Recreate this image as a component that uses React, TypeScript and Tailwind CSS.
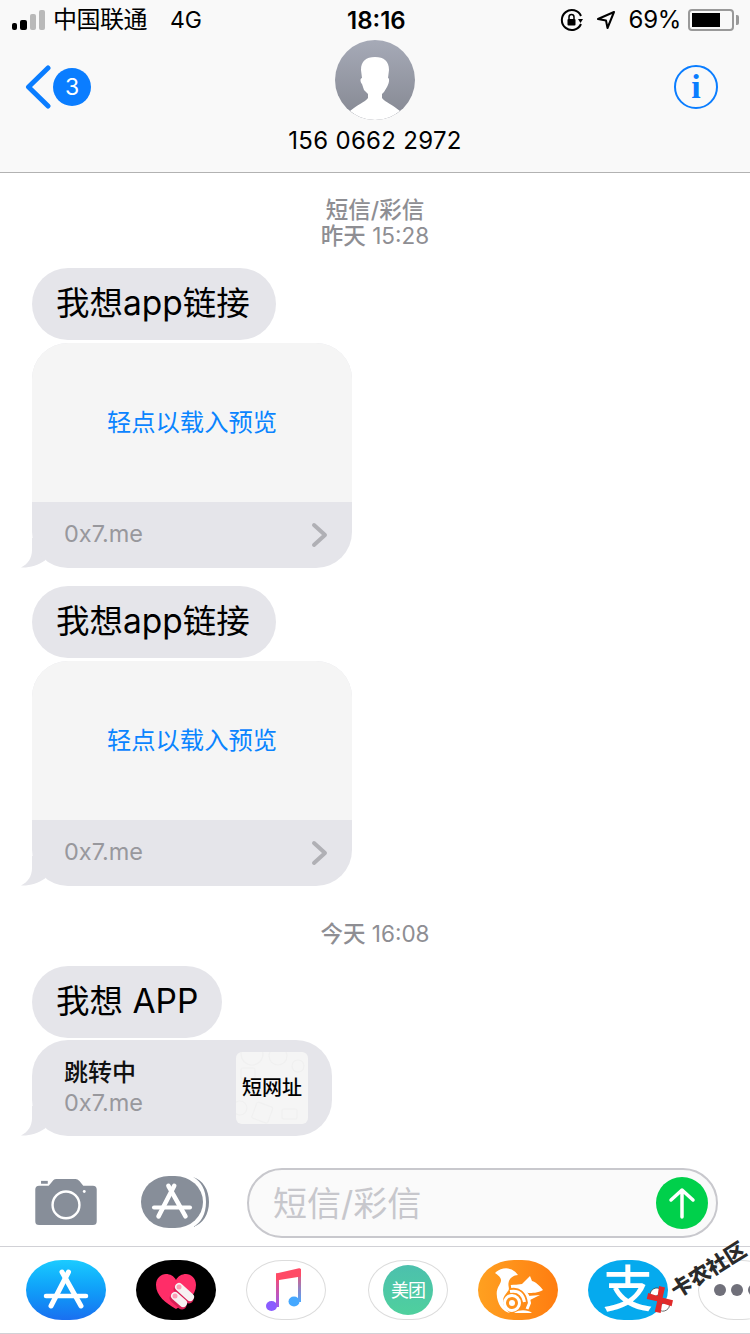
const font = { fontFamily: '"Inter", "Noto Sans CJK SC", sans-serif' };

// the little curl under the last bubble of a group
function Tail() {
  return (
    <svg className="absolute left-[-12px] bottom-0" width="32" height="30" viewBox="0 0 32 30">
      <path d="M12 0 V12 C12 20 8 26 1 29.500 C9 30 18 27.500 25 22.500 L32 0 Z" fill="#e5e5ea" />
    </svg>
  );
}

function TextBubble({ text, width }: { text: string; width: string }) {
  return (
    <div className={`${width} h-[72px] rounded-[36px] bg-[#e5e5ea] flex items-center pl-[24px] text-[33.500px] text-black whitespace-nowrap`}>
      <span className="mt-[-2px]">{text}</span>
    </div>
  );
}

function LinkCard() {
  return (
    <div className="relative w-[320px] h-[225px] mt-[3px]">
      <Tail />
      <div className="relative h-full rounded-[36px] overflow-hidden bg-[#e5e5ea]">
        <div className="h-[159px] bg-[#f5f5f5] flex items-center justify-center text-[24.300px] text-[#0a84ff]">
          轻点以载入预览
        </div>
        <div className="h-[66px] flex items-center justify-between pl-[32px] pr-[23px] text-[23.500px] text-[#98989d]">
          <span className="mt-[-2px]">0x7.me</span>
          <svg width="18" height="26" viewBox="0 0 18 26" fill="none" stroke="#b0b0b5" strokeWidth="4" strokeLinecap="round" strokeLinejoin="round">
            <path d="M3 3 L14 13 L3 23" />
          </svg>
        </div>
      </div>
    </div>
  );
}

function AppStoreGlyph({ size = 80 }: { size?: number }) {
  return (
    <svg className="shrink-0" width={size} height={(size * 60) / 80} viewBox="0 0 80 60" fill="none" stroke="white" strokeWidth="5" strokeLinecap="round">
      <path d="M42.500 12 L25 46" />
      <path d="M36 12 L55 46" />
      <path d="M20 36 H60" strokeWidth="4.500" />
    </svg>
  );
}

function Oval({ className, children }: { className: string; children?: React.ReactNode }) {
  return <div className={`w-[80px] h-[60px] shrink-0 rounded-[36px/30px] flex items-center justify-center overflow-hidden ${className}`}>{children}</div>;
}

function StatusBar() {
  return (
    <div className="relative h-[40px] flex items-center justify-between text-[24px] text-black pl-[12px] pr-[11px]">
      <div className="flex items-center">
        <div className="flex items-end gap-[3px] w-[34px]">
          <span className="w-[5px] h-[7px] rounded-[2px] bg-black" />
          <span className="w-[7px] h-[10px] rounded-[2px] bg-black" />
          <span className="w-[6px] h-[16px] rounded-[2px] bg-[#b9b9b9]" />
          <span className="w-[6px] h-[20px] rounded-[2px] bg-[#b9b9b9]" />
        </div>
        <span className="ml-[7px] tracking-[-0.5px]">中国联通</span>
        <span className="ml-[23px] text-[23px]">4G</span>
      </div>
      <span className="absolute left-[347px] top-[3px] font-semibold">18:16</span>
      <div className="flex items-center">
        <svg width="24" height="24" viewBox="0 0 24 24" fill="none">
          <path d="M21 8 A10 10 0 1 0 21 16" stroke="black" strokeWidth="2" />
          <path d="M18 11 L23 11 L20.500 15 Z" fill="black" />
          <rect x="7.500" y="11" width="8" height="6.500" rx="1" fill="black" />
          <path d="M9 11 V9 A2.500 2.500 0 0 1 14 9 V11" stroke="black" strokeWidth="1.500" />
        </svg>
        <svg className="ml-[12px]" width="20" height="20" viewBox="0 0 20 20" fill="none" stroke="black" strokeWidth="2" strokeLinejoin="round">
          <path d="M18 2 L2 9 L10 10.500 L11.500 18 Z" />
        </svg>
        <span className="ml-[13px] tracking-[-0.3px]">69%</span>
        <div className="ml-[7px] w-[46px] h-[22px] rounded-[4px] border-2 border-[#999999] p-[2px]">
          <div className="h-full w-[28px] bg-black" />
        </div>
        <span className="ml-[2px] w-[3px] h-[10px] rounded-r-[2px] bg-[#999999]" />
      </div>
    </div>
  );
}

function NavBar() {
  return (
    <div className="h-[133px] border-b border-[#b2b2b2] relative flex flex-col items-center">
      <div className="absolute left-[25px] top-[25px] flex items-center">
        <svg width="26" height="44" viewBox="0 0 26 44" fill="none" stroke="#0a7dff" strokeWidth="5" strokeLinecap="round" strokeLinejoin="round">
          <path d="M23 3 L3.500 22 L23 41" />
        </svg>
        <div className="ml-[2px] w-[38px] h-[38px] rounded-full bg-[#0a7dff] flex items-center justify-center text-white text-[23px]">3</div>
      </div>
      <div className="w-[80px] h-[80px] rounded-full overflow-hidden bg-gradient-to-b from-[#a6aab7] to-[#858892]">
        <svg width="80" height="80" viewBox="0 0 80 80">
          <path d="M40 17 C49 17 54 21 54 30 L53 38 C55 38 54 44 52 47 L49 52 L47 54 V58 C50 62 58 65 65 71 A38 38 0 0 1 15 71 C22 65 30 62 33 58 V54 L29 50 L27 44 C25 42 25 38 27 38 L26 30 C26 21 31 17 40 17 Z" fill="white" />
        </svg>
      </div>
      <div className="mt-[6px] text-[24px] leading-[30px] tracking-[0.3px] text-black">156 0662 2972</div>
      <div className="absolute left-[674px] top-[25px] w-[44px] h-[44px] rounded-full border-2 border-[#0a7dff] flex items-center justify-center text-[#0a7dff] text-[34px] font-bold leading-none" style={{ fontFamily: '"Liberation Serif", serif' }}>
        i
      </div>
    </div>
  );
}

function InputBar() {
  return (
    <div className="absolute left-0 right-0 top-[1168px] h-[79px] flex items-start pl-[34px] bg-white border-b border-[#d1d1d6]">
      <svg className="mt-[10px]" width="64" height="48" viewBox="0 0 64 50">
        <path d="M6 8 H14 L19 2 Q20 1 22 1 H42 Q44 1 46 3 L50 8 H60 Q64 8 64 12 V45 Q64 49 60 49 H4 Q0 49 0 45 V12 Q0 8 4 8 Z" fill="#878e99" />
        <rect x="6" y="3" width="7" height="3" fill="#878e99" />
        <circle cx="32" cy="28" r="14" fill="none" stroke="white" strokeWidth="2.500" />
        <circle cx="51" cy="14" r="1.500" fill="white" />
      </svg>
      <div className="relative ml-[43px] mt-[8px] w-[62px] h-[52px] rounded-[28px/26px] bg-[#878e99] flex items-center justify-center overflow-hidden">
        <AppStoreGlyph size={72} />
      </div>
      <svg className="mt-[8px] ml-[-10px]" width="18" height="52" viewBox="0 0 18 52">
        <path d="M0 1 C10 4 16 14 16 26 C16 38 10 48 0 51 C8 47 13 38 13 26 C13 14 8 5 0 1 Z" fill="#878e99" />
      </svg>
      <div className="ml-[36px] w-[471px] h-[70px] rounded-[35px] border-2 border-[#c8c8cd] bg-[#fafafa] flex items-center justify-between pl-[24px] pr-[8px] text-[34px] text-[#c7c7cc]">
        <span>短信/彩信</span>
        <div className="w-[52px] h-[52px] rounded-full bg-[#00d04b] flex items-center justify-center">
          <svg width="28" height="32" viewBox="0 0 28 32" fill="none" stroke="white" strokeWidth="3.500" strokeLinecap="round" strokeLinejoin="round">
            <path d="M14 30 V3 M3 13 L14 3 L25 13" />
          </svg>
        </div>
      </div>
    </div>
  );
}

function AppDrawer() {
  return (
    <div className="absolute left-0 right-0 top-[1247px] h-[87px] border-b border-[#d1d1d6] overflow-hidden flex items-start pt-[13px] pl-[26px] gap-[30px] bg-white">
      <Oval className="bg-gradient-to-b from-[#1ccbff] to-[#1a6ff0]">
        <AppStoreGlyph />
      </Oval>
      <Oval className="bg-black">
        <svg width="80" height="60" viewBox="0 0 80 60">
          <path d="M40 49 C30 43 20 36 20 25 C20 18 25 14 30 14 C34 14 38 16 40 20 C42 16 46 14 50 14 C55 14 60 18 60 25 C60 36 50 43 40 49 Z" fill="#ff2d68" />
          <path d="M43 27 L54 37 M39 36 L47 43" stroke="#d81f55" strokeWidth="9" strokeLinecap="round" transform="translate(-1 2)" />
          <path d="M43 27 L54 37 M39 36 L47 43" stroke="#f7f1f2" strokeWidth="8" strokeLinecap="round" />
          <circle cx="43" cy="27" r="2.500" fill="#ff9bb5" />
          <circle cx="39" cy="36" r="2.500" fill="#ff9bb5" />
        </svg>
      </Oval>
      <Oval className="border border-[#dcdcdc] bg-white">
        <svg className="shrink-0" width="80" height="60" viewBox="0 0 80 60">
          <defs>
            <linearGradient id="stemLeft" x1="0" y1="0" x2="0" y2="1">
              <stop offset="0" stopColor="#ff4a66" />
              <stop offset="1" stopColor="#9a5cf0" />
            </linearGradient>
            <linearGradient id="stemRight" x1="0" y1="0" x2="0" y2="1">
              <stop offset="0" stopColor="#ff4a66" />
              <stop offset="1" stopColor="#4aa8ff" />
            </linearGradient>
          </defs>
          <ellipse cx="25.500" cy="46" rx="5.500" ry="5" fill="#8a5cff" />
          <ellipse cx="48" cy="41.500" rx="5.500" ry="5" fill="#45a8ff" />
          <path d="M30 13.500 H33 V47 H30 Z" fill="url(#stemLeft)" />
          <path d="M52 9 H55 V42 H52 Z" fill="url(#stemRight)" />
          <path d="M30 13.500 L53 8.300 Q55 8 55 10 V16.500 L30 20.500 Z" fill="#ff4a66" />
        </svg>
      </Oval>
      <div className="w-[3px] h-[52px] mt-[4px] rounded-[2px] bg-[#e3e3ea] mx-[-9px]" />
      <Oval className="border border-[#dcdcdc] bg-white">
        <div className="w-[50px] h-[50px] rounded-full bg-gradient-to-b from-[#4cc0ad] to-[#4fd09d] flex items-center justify-center text-white text-[18px] tracking-[-1px]">美团</div>
      </Oval>
      <Oval className="bg-gradient-to-r from-[#ffa020] to-[#ff7d10]">
        <svg className="shrink-0" width="80" height="60" viewBox="0 0 80 60" fill="white">
          <path d="M17 13 C22 8 33 5 40 15 C36 15 31 18 30.500 23 C30 27 32 28 30 31 C27 35 25 37 25 41 C25 45 27 49 32 53 C25 52 19 44 18.700 34 C18.500 28 22 25 23 21 C23.500 18 20 15 17 13 Z" />
          <circle cx="34" cy="43" r="3" />
          <circle cx="34" cy="43" r="7.500" fill="none" stroke="white" strokeWidth="3" />
          <path d="M32 31.500 C40 30 45 34 46.500 42" fill="none" stroke="white" strokeWidth="3" />
          <path d="M33 26.500 C42 25 50 31 51.500 43 L49 49" fill="none" stroke="white" strokeWidth="3" />
          <path d="M36 25 L44 24 L52 16 L54 21 C58 22 62 26 65 30 C60 33 54 33 50 33 C46 31 40 28 36 25 Z" />
          <path d="M50 36 L62 35 L52 40 Z" />
          <path d="M36 53 C42 49 50 50 54 53 Z" />
        </svg>
      </Oval>
      <Oval className="bg-[#05aaee] text-white text-[50px] leading-none">
        <span className="mt-[-2px] font-medium">支</span>
      </Oval>
      <Oval className="border border-[#dcdcdc] bg-white justify-start pl-[15px] gap-[5px]">
        <span className="w-[12px] h-[12px] shrink-0 rounded-full bg-[#70707a]" />
        <span className="w-[12px] h-[12px] shrink-0 rounded-full bg-[#70707a]" />
        <span className="w-[12px] h-[12px] shrink-0 rounded-full bg-[#70707a]" />
      </Oval>
    </div>
  );
}

// forum watermark sitting over the bottom right corner
function Watermark() {
  return (
    <div className="absolute left-[648px] top-[1293px] h-[28px] flex items-center -rotate-[32deg] origin-left">
      <svg width="28" height="28" viewBox="0 0 26 26">
        <ellipse cx="13" cy="5" rx="5" ry="3.500" fill="white" stroke="#333333" strokeWidth="0.600" />
        <ellipse cx="13" cy="21" rx="5" ry="3.500" fill="white" stroke="#333333" strokeWidth="0.600" />
        <path d="M3 6 L7 2 L13 9 L19 2 L23 6 L16 13 L23 20 L19 24 L13 17 L7 24 L3 20 L10 13 Z" fill="#e02a2a" />
      </svg>
      <span className="ml-[1px] text-[21px] font-black leading-none text-[#2a2a2a] whitespace-nowrap">卡农社区</span>
    </div>
  );
}

export default function App() {
  return (
    <div className="relative w-[750px] h-[1334px] bg-white overflow-hidden" style={font}>
      <div className="bg-[#f9f9f9]">
        <StatusBar />
        <NavBar />
      </div>

      {/* messages */}
      <div className="pl-[32px]">
        <div className="pt-[24px] -ml-[32px] text-center text-[22.500px] leading-[26px] text-[#8e8e93]">
          <div className="font-medium">短信/彩信</div>
          <div>
            <span className="font-medium">昨天</span> 15:28
          </div>
        </div>
        <div className="mt-[19px]">
          <TextBubble text="我想app链接" width="w-[244px]" />
          <LinkCard />
        </div>
        <div className="mt-[18px]">
          <TextBubble text="我想app链接" width="w-[244px]" />
          <LinkCard />
        </div>
        <div className="mt-[35px] -ml-[32px] text-center text-[22.500px] leading-[26px] text-[#8e8e93]">
          <span className="font-medium">今天</span> 16:08
        </div>
        <div className="mt-[19px]">
          <TextBubble text="我想 APP" width="w-[190px]" />
          <div className="relative w-[300px] h-[96px] mt-[2px]">
            <Tail />
            <div className="relative h-full rounded-[36px] bg-[#e5e5ea] flex items-center justify-between pl-[32px] pr-[24px]">
              <div>
                <div className="text-[24px] leading-[30px] font-medium text-[#111111]">跳转中</div>
                <div className="text-[23.500px] leading-[30px] text-[#98989d]">0x7.me</div>
              </div>
              <div className="relative w-[72px] h-[72px] rounded-[6px] bg-[#f5f5f5] overflow-hidden flex items-center justify-center text-[20px] font-medium text-black whitespace-nowrap">
                {/* faint doodles behind the thumbnail label */}
                <svg className="absolute inset-0" width="72" height="72" viewBox="0 0 72 72" fill="none" stroke="#f0f0f0" strokeWidth="1.200">
                  <circle cx="16" cy="2" r="11" />
                  <circle cx="42" cy="4" r="9" />
                  <rect x="5" y="16" width="14" height="11" rx="2" />
                  <circle cx="62" cy="14" r="6" />
                  <rect x="18" y="52" width="17" height="17" rx="2" transform="rotate(20 26 60)" />
                  <circle cx="4" cy="56" r="7" />
                  <rect x="46" y="57" width="15" height="10" rx="2" />
                </svg>
                <span className="relative">短网址</span>
              </div>
            </div>
          </div>
        </div>
      </div>

      <InputBar />
      <AppDrawer />
      <Watermark />
    </div>
  );
}
